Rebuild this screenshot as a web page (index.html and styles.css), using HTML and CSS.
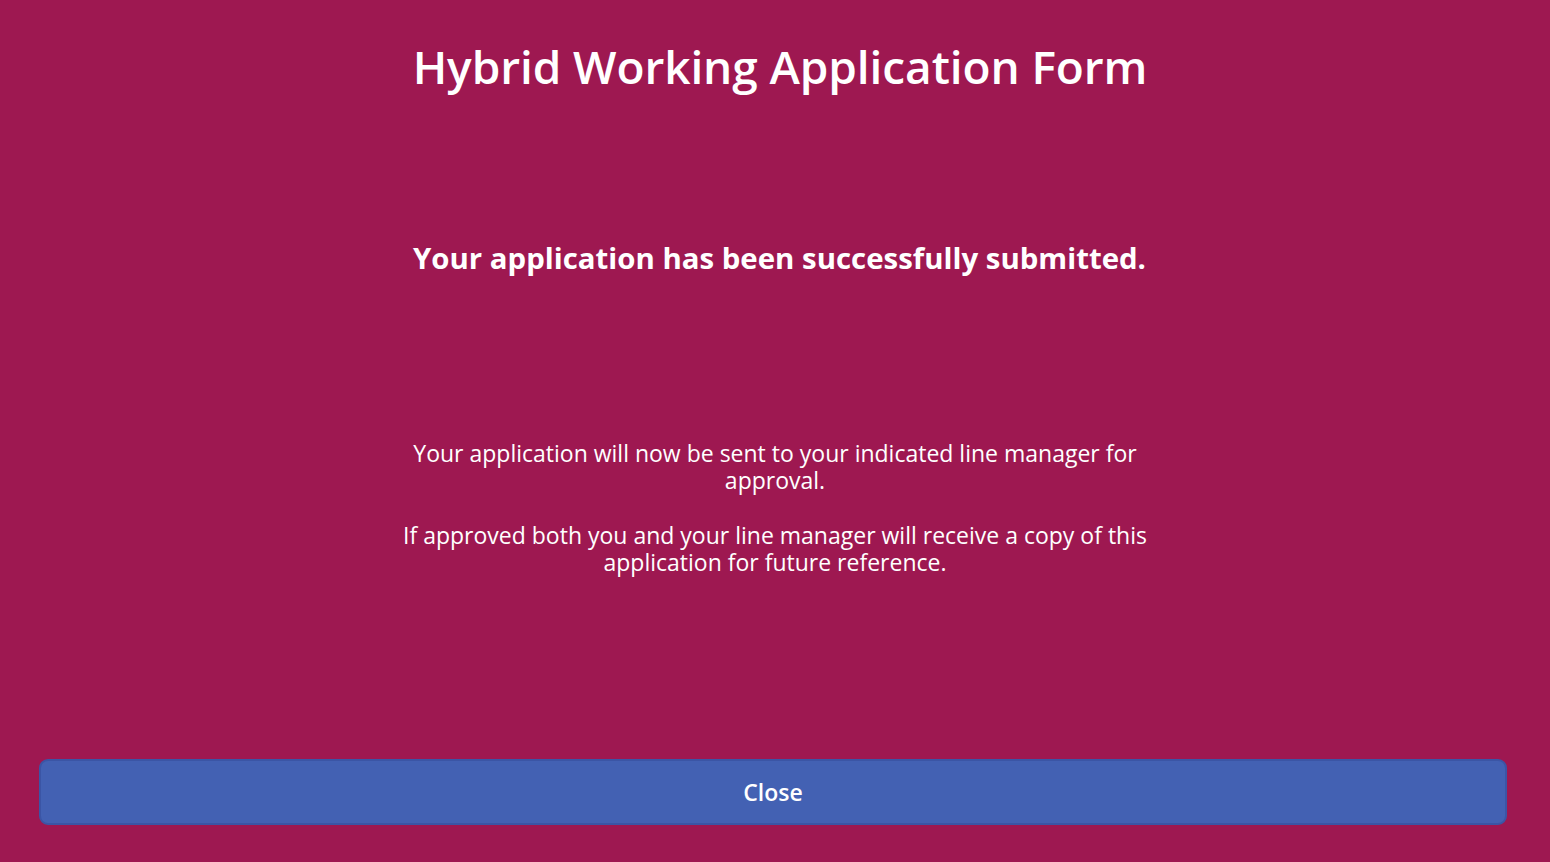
FILE: index.html
```html
<!DOCTYPE html>
<html lang="en">
<head>
    <meta charset="UTF-8">
    <meta name="viewport" content="width=device-width, initial-scale=1.0">
    <title>Hybrid Working Application Form</title>
    <link rel="stylesheet" href="styles.css">
</head>
<body>
    <div class="screen">
        <!-- Header -->
        <div class="header">
            <h1>Hybrid Working Application Form</h1>
        </div>

        <!-- Confirmation -->
        <div class="confirm">
            <h2>Your application has been successfully submitted.</h2>
        </div>

        <!-- Info text -->
        <div class="info">
            <p>Your application will now be sent to your indicated line manager for approval.</p>
            <p>If approved both you and your line manager will receive a copy of this application for future reference.</p>
        </div>

        <!-- Footer -->
        <div class="footer">
            <button class="close-btn">Close</button>
        </div>
    </div>
</body>
</html>
```

FILE: styles.css
```css
/* Global Styles */
body {
    font-family: 'Open Sans', 'Noto Sans', sans-serif;
    margin: 0;
    padding: 0;
    background-color: #9e1851;
    color: #fff;
    height: 100vh;
}

.screen {
    display: flex;
    flex-direction: column;
    height: 862px;
}

/* Header */
.header {
    height: 136px;
    display: flex;
    justify-content: center;
    padding: 36px 0 0 10px;
    box-sizing: border-box;
}

.header h1 {
    margin: 0;
    font-size: 46px;
    font-weight: 600;
    letter-spacing: -0.1px;
    line-height: 60px;
}

/* Confirmation */
.confirm {
    height: 120px;
    display: flex;
    justify-content: center;
    align-items: center;
    padding: 62px 0 0 9px;
}

.confirm h2 {
    margin: 0;
    font-size: 29.4px;
    font-weight: 700;
}

/* Info text */
.info {
    width: 760px;
    margin: 0 auto;
    padding-top: 122px;
    text-align: center;
    font-size: 23px;
    line-height: 27px;
}

.info p {
    margin: 0 0 28px;
}

/* Footer */
.footer {
    margin-top: auto;
    padding: 0 43px 37px 39px;
}

.close-btn {
    width: 100%;
    height: 66px;
    background: #4361b3;
    border: 2px solid #3b55a5;
    border-radius: 9px;
    color: #fff;
    font-family: inherit;
    font-size: 23px;
    font-weight: 600;
    cursor: pointer;
}
```
